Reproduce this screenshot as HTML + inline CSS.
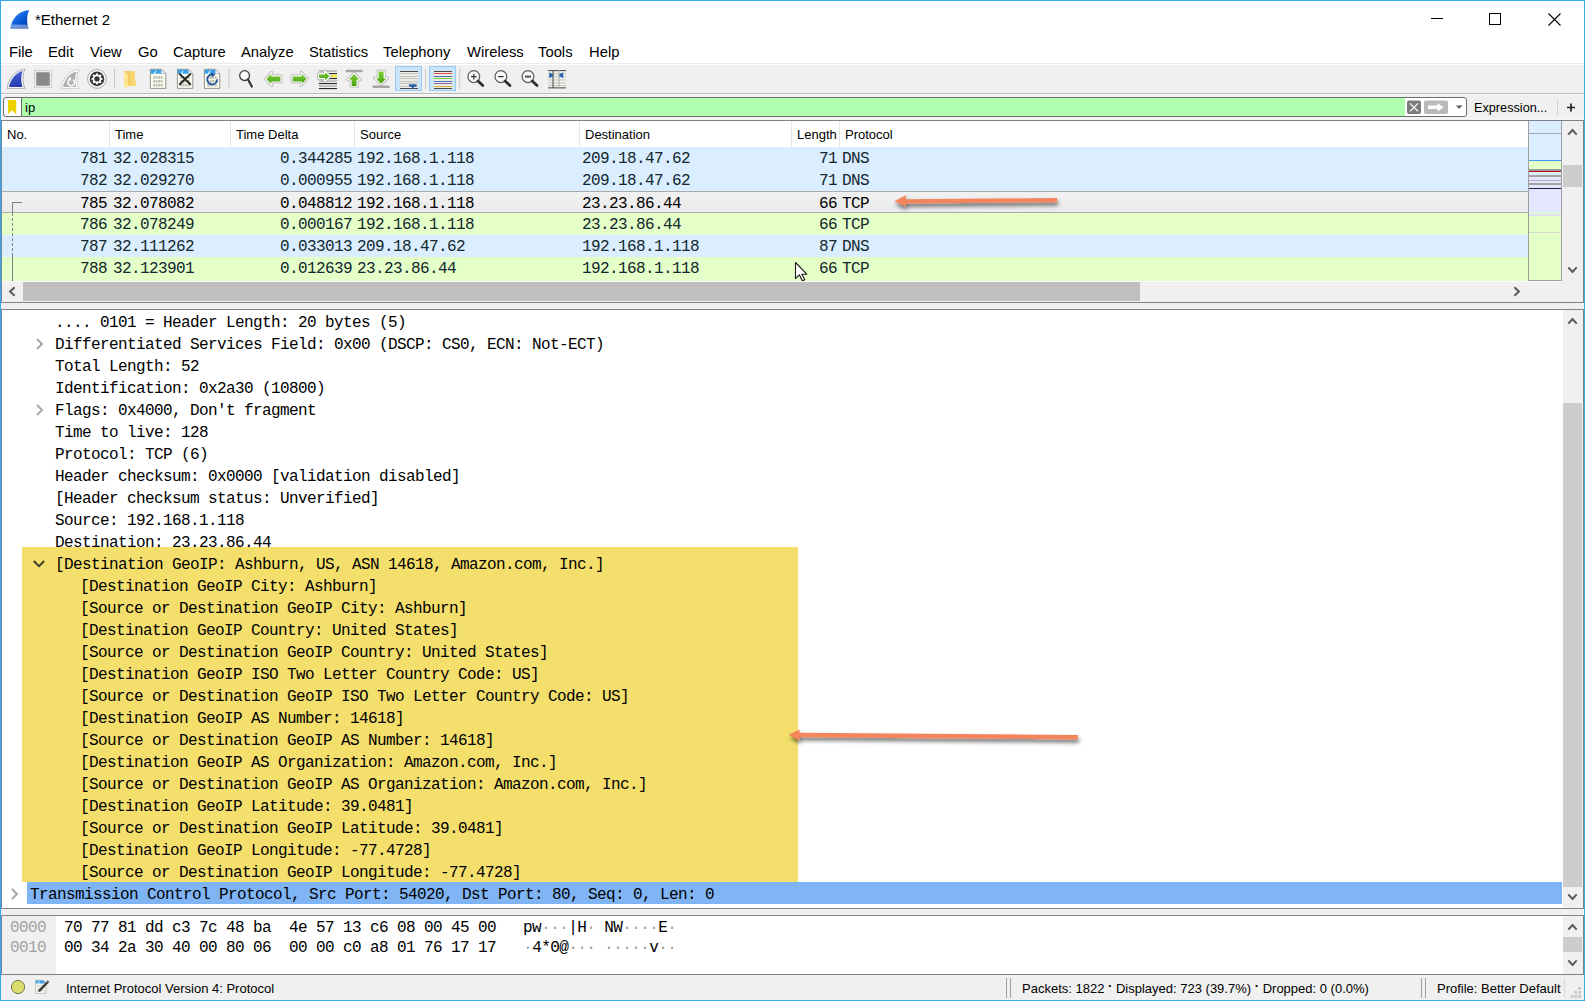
<!DOCTYPE html>
<html><head><meta charset="utf-8">
<style>
*{margin:0;padding:0;box-sizing:border-box}
html,body{width:1585px;height:1001px;overflow:hidden;background:#fff}
body{position:relative;font-family:"Liberation Sans",sans-serif;color:#000}
.a{position:absolute}
.mono{font-family:"Liberation Mono",monospace;font-size:16px;letter-spacing:-0.6px;white-space:pre}
.sans{font-family:"Liberation Sans",sans-serif;white-space:pre}
/* frame */
#bt{left:0;top:0;width:1585px;height:1px;background:#35a8f0}
#bl{left:0;top:0;width:1px;height:1001px;background:#35a8f0}
#br{left:1584px;top:0;width:1px;height:1001px;background:#35a8f0}
#bb{left:0;top:1000px;width:1585px;height:1px;background:#35a8f0}
/* title */
#title{left:35px;top:10px;font-size:15px;line-height:20px}
.menu{top:42px;font-size:14.8px;line-height:20px}
#toolbar{left:1px;top:63px;width:1583px;height:30px;background:#f0f0f0;border-top:1px solid #ebebeb;box-shadow:inset 0 1px 0 #fff}
#filterbar{left:1px;top:93px;width:1583px;height:27px;background:#f0f0f0;border-top:1px solid #a0a0a0}
/* packet list */
#plist{left:1px;top:120px;width:1583px;height:182px;background:#fff;border-top:1px solid #a0a0a0;border-left:1px solid #a0a0a0}
.hdr{top:122px;height:26px;font-size:13px;line-height:26px}
.hsep{top:121px;width:1px;height:26px;background:#e5e5e5}
.row{left:2px;width:1526px;height:22px}
.cell{top:0;line-height:22px}
.pr{left:0;width:1526px;height:22px;line-height:22px}
.pr span{top:1px}
.dl{line-height:22px;height:22px;padding-top:2px}
.hx{line-height:20px;height:20px;padding-top:2px}
.off{color:#a3a3a3}
.g{color:#a0a0a0}
.st{top:980px;font-size:13px;line-height:18px}
</style></head><body>
<div class="a" id="bt"></div><div class="a" id="bl"></div><div class="a" id="br"></div><div class="a" id="bb"></div>

<!-- title bar -->
<svg class="a" style="left:10px;top:10px" width="20" height="20" viewBox="0 0 20 20">
<defs><linearGradient id="fin" x1="0" y1="0" x2="1" y2="1"><stop offset="0" stop-color="#4a94f2"/><stop offset="0.55" stop-color="#0a5ad8"/><stop offset="1" stop-color="#032f94"/></linearGradient>
<linearGradient id="finb" x1="0" y1="0" x2="0" y2="1"><stop offset="0" stop-color="#fff" stop-opacity="0"/><stop offset="0.75" stop-color="#fff" stop-opacity="0"/><stop offset="0.85" stop-color="#c8d8f8" stop-opacity="0.55"/><stop offset="1" stop-color="#8090c0" stop-opacity="0.7"/></linearGradient></defs>
<path d="M0.4 18.6 C1.6 9 8 1.2 19.4 0.1 C17 4 16.3 11 18.4 18.6 Z" fill="url(#fin)"/>
<path d="M0.4 18.6 C1.6 9 8 1.2 19.4 0.1 C17 4 16.3 11 18.4 18.6 Z" fill="url(#finb)"/>
</svg>
<div class="a sans" id="title">*Ethernet 2</div>
<div class="a" style="left:1431px;top:18px;width:12px;height:1px;background:#000"></div>
<div class="a" style="left:1489px;top:13px;width:12px;height:12px;border:1px solid #000"></div>
<svg class="a" style="left:1548px;top:13px" width="13" height="13" viewBox="0 0 13 13"><path d="M0.5 0.5L12.5 12.5M12.5 0.5L0.5 12.5" stroke="#000" stroke-width="1.1"/></svg>

<!-- menu -->
<div class="a sans menu" style="left:9px">File</div>
<div class="a sans menu" style="left:48px">Edit</div>
<div class="a sans menu" style="left:90px">View</div>
<div class="a sans menu" style="left:138px">Go</div>
<div class="a sans menu" style="left:173px">Capture</div>
<div class="a sans menu" style="left:241px">Analyze</div>
<div class="a sans menu" style="left:309px">Statistics</div>
<div class="a sans menu" style="left:383px">Telephony</div>
<div class="a sans menu" style="left:467px">Wireless</div>
<div class="a sans menu" style="left:538px">Tools</div>
<div class="a sans menu" style="left:589px">Help</div>

<div class="a" id="toolbar"></div>
<svg class="a" style="left:0;top:64px" width="600" height="29" viewBox="0 64 600 29">
<defs>
<linearGradient id="bfin" x1="0" y1="0" x2="0.3" y2="1"><stop offset="0" stop-color="#6a80dc"/><stop offset="0.5" stop-color="#3a52c8"/><stop offset="1" stop-color="#2a3cb0"/></linearGradient>
<linearGradient id="grn" x1="0" y1="0" x2="0" y2="1"><stop offset="0" stop-color="#7fcf3a"/><stop offset="1" stop-color="#4aa010"/></linearGradient>
<linearGradient id="fold" x1="0" y1="0" x2="1" y2="1"><stop offset="0" stop-color="#fde79a"/><stop offset="1" stop-color="#f2c65a"/></linearGradient>
</defs>
<!-- 1 shark fin -->
<path d="M7.2 88.4 C8.5 79 14 70.5 25 69.2 C22.5 74 22 81 24.8 88.4 Z" fill="#fff" stroke="#9a9a9a" stroke-width="0.8"/>
<path d="M9 87 C10.5 80 15 72.5 22.8 71 C21 75 20.6 81 22.6 87 Z" fill="url(#bfin)"/>
<!-- 2 stop -->
<rect x="34.3" y="70.3" width="17.4" height="17.4" fill="#ebebeb" stroke="#c8c8c8" stroke-width="0.8"/>
<rect x="36.2" y="72.2" width="13.6" height="13.6" rx="1" fill="#8a8a8a"/>
<!-- 3 restart fin -->
<path d="M61.2 88.4 C62.5 79 68 70.5 79 69.2 C76.5 74 76 81 78.8 88.4 Z" fill="#fff" stroke="#c4c4c4" stroke-width="0.8"/>
<path d="M63 87 C64.5 80 69 72.5 76.8 71.8 C75 75 74.6 81 76.3 87 Z" fill="#b0b0b0"/>
<path d="M73 79.6 A3.3 3.3 0 1 1 69 80" fill="none" stroke="#fff" stroke-width="1.6"/>
<path d="M67.6 79.6 L70.6 76.6 L71.2 80.8Z" fill="#fff"/>
<!-- 4 gear -->
<circle cx="97" cy="78.9" r="9.4" fill="#fafafa" stroke="#a6a6a6" stroke-width="1"/>
<circle cx="97" cy="78.9" r="7.3" fill="#383838"/>
<g fill="#fff" transform="translate(97 78.9)">
<circle r="4.3"/>
<rect x="-0.95" y="-5.5" width="1.9" height="11"/>
<rect x="-0.95" y="-5.5" width="1.9" height="11" transform="rotate(45)"/>
<rect x="-0.95" y="-5.5" width="1.9" height="11" transform="rotate(90)"/>
<rect x="-0.95" y="-5.5" width="1.9" height="11" transform="rotate(135)"/>
</g>
<circle cx="97" cy="78.9" r="2.7" fill="#383838"/>
<!-- sep -->
<rect x="114" y="69" width="1" height="20" fill="#c8c8c8"/>
<!-- 6 folder -->
<defs><linearGradient id="fold2" x1="0" y1="0" x2="1" y2="0"><stop offset="0" stop-color="#eec558"/><stop offset="1" stop-color="#fcdd78"/></linearGradient></defs>
<path d="M124.4 71 L135 71 L135 80.6 L135.9 81.4 L135.9 86 L126.5 86 Z" fill="url(#fold2)"/>
<path d="M124 71 L127.8 74 L127.8 85.8 L126.6 88.2 L124 86.2 Z" fill="#fde596"/>
<!-- 7 doc -->
<path d="M150.4 69.4 L161.6 69.4 L165.8 73.6 L165.8 88.4 L150.4 88.4 Z" fill="#fcfcee" stroke="#7a7a7a" stroke-width="0.8"/><path d="M150.8 69.8 L161.4 69.8 L165.4 73.8 L150.8 73.8 Z" fill="#34a2ea"/><path d="M161.4 69.8 L165.4 73.6 L161.4 73.6 L161.4 69.8Z" fill="#fff" stroke="#b0b0b0" stroke-width="0.5"/><path d="M153.6 73.8 Q154.6 71 157.2 69.8 Q155.4 71.5 155.6 73.8Z" fill="#fff" opacity="0.85"/><g fill="#a8a8a0" opacity="0.8"><rect x="153.2" y="76.2" width="1.9" height="2.5"/><rect x="155.7" y="76.2" width="1.9" height="2.5"/><rect x="158.2" y="76.2" width="1.9" height="2.5"/><rect x="160.7" y="76.2" width="1.9" height="2.5"/><rect x="153.2" y="80.1" width="1.9" height="2.5"/><rect x="155.7" y="80.1" width="1.9" height="2.5"/><rect x="158.2" y="80.1" width="1.9" height="2.5"/><rect x="160.7" y="80.1" width="1.9" height="2.5"/><rect x="153.2" y="83.9" width="1.9" height="2.5"/><rect x="155.7" y="83.9" width="1.9" height="2.5"/><rect x="158.2" y="83.9" width="1.9" height="2.5"/><rect x="160.7" y="83.9" width="1.9" height="2.5"/></g>
<!-- 8 doc x -->
<path d="M177.4 69.4 L188.6 69.4 L192.8 73.6 L192.8 88.4 L177.4 88.4 Z" fill="#fcfcee" stroke="#7a7a7a" stroke-width="0.8"/><path d="M177.8 69.8 L188.4 69.8 L192.4 73.8 L177.8 73.8 Z" fill="#34a2ea"/><path d="M188.4 69.8 L192.4 73.6 L188.4 73.6 L188.4 69.8Z" fill="#fff" stroke="#b0b0b0" stroke-width="0.5"/><path d="M180.6 73.8 Q181.6 71 184.2 69.8 Q182.4 71.5 182.6 73.8Z" fill="#fff" opacity="0.85"/><g fill="#a8a8a0" opacity="0.8"><rect x="180.2" y="76.2" width="1.9" height="2.5"/><rect x="182.7" y="76.2" width="1.9" height="2.5"/><rect x="185.2" y="76.2" width="1.9" height="2.5"/><rect x="187.7" y="76.2" width="1.9" height="2.5"/><rect x="180.2" y="80.1" width="1.9" height="2.5"/><rect x="182.7" y="80.1" width="1.9" height="2.5"/><rect x="185.2" y="80.1" width="1.9" height="2.5"/><rect x="187.7" y="80.1" width="1.9" height="2.5"/><rect x="180.2" y="83.9" width="1.9" height="2.5"/><rect x="182.7" y="83.9" width="1.9" height="2.5"/><rect x="185.2" y="83.9" width="1.9" height="2.5"/><rect x="187.7" y="83.9" width="1.9" height="2.5"/></g>
<path d="M179.3 73.6 L190.8 84.8 M190.8 73.6 L179.3 84.8" stroke="#262626" stroke-width="2"/>
<!-- 9 doc reload -->
<path d="M204.4 69.4 L215.6 69.4 L219.8 73.6 L219.8 88.4 L204.4 88.4 Z" fill="#fcfcee" stroke="#7a7a7a" stroke-width="0.8"/><path d="M204.8 69.8 L215.4 69.8 L219.4 73.8 L204.8 73.8 Z" fill="#34a2ea"/><path d="M215.4 69.8 L219.4 73.6 L215.4 73.6 L215.4 69.8Z" fill="#fff" stroke="#b0b0b0" stroke-width="0.5"/><path d="M207.6 73.8 Q208.6 71 211.2 69.8 Q209.4 71.5 209.6 73.8Z" fill="#fff" opacity="0.85"/><g fill="#a8a8a0" opacity="0.8"><rect x="207.2" y="76.2" width="1.9" height="2.5"/><rect x="209.7" y="76.2" width="1.9" height="2.5"/><rect x="212.2" y="76.2" width="1.9" height="2.5"/><rect x="214.7" y="76.2" width="1.9" height="2.5"/><rect x="207.2" y="80.1" width="1.9" height="2.5"/><rect x="209.7" y="80.1" width="1.9" height="2.5"/><rect x="212.2" y="80.1" width="1.9" height="2.5"/><rect x="214.7" y="80.1" width="1.9" height="2.5"/><rect x="207.2" y="83.9" width="1.9" height="2.5"/><rect x="209.7" y="83.9" width="1.9" height="2.5"/><rect x="212.2" y="83.9" width="1.9" height="2.5"/><rect x="214.7" y="83.9" width="1.9" height="2.5"/></g>
<path d="M213.4 74.6 A5 5 0 1 0 217.2 79.2" fill="none" stroke="#1f4f9a" stroke-width="1.7"/>
<path d="M211.2 72.6 L215.6 74.4 L211.8 77.2Z" fill="#1f4f9a"/>
<!-- sep -->
<rect x="228.5" y="69" width="1" height="20" fill="#c8c8c8"/>
<!-- 11 find -->
<circle cx="244.6" cy="75.6" r="4.9" fill="#fbfbfb" stroke="#3c3c3c" stroke-width="1.3"/>
<path d="M248 79.5 L251.8 86.5" stroke="#333" stroke-width="2.2" stroke-linecap="round"/>
<!-- 12 back arrow -->
<path d="M265.6 78.9 L271.8 72.4 L271.8 75.8 L281 75.8 L281 82 L271.8 82 L271.8 85.4 Z" fill="none" stroke="#a8a8a8" stroke-width="2.6" stroke-linejoin="round"/><path d="M265.6 78.9 L271.8 72.4 L271.8 75.8 L281 75.8 L281 82 L271.8 82 L271.8 85.4 Z" fill="url(#grn)" stroke="#fff" stroke-width="1.2" stroke-linejoin="round"/>
<!-- 13 fwd arrow -->
<path d="M307.4 78.9 L301.2 72.4 L301.2 75.8 L292 75.8 L292 82 L301.2 82 L301.2 85.4 Z" fill="none" stroke="#a8a8a8" stroke-width="2.6" stroke-linejoin="round"/><path d="M307.4 78.9 L301.2 72.4 L301.2 75.8 L292 75.8 L292 82 L301.2 82 L301.2 85.4 Z" fill="url(#grn)" stroke="#fff" stroke-width="1.2" stroke-linejoin="round"/>
<!-- 14 go to packet -->
<rect x="318.8" y="70.5" width="18.2" height="1.1" fill="#9a9a9a"/><rect x="318.8" y="73.0" width="18.2" height="1.1" fill="#2a2a2a"/><rect x="318.8" y="75.5" width="18.2" height="1.1" fill="#2a2a2a"/><rect x="318.8" y="78.0" width="18.2" height="1.1" fill="#2a2a2a"/><rect x="318.8" y="80.5" width="18.2" height="1.1" fill="#9a9a9a"/><rect x="318.8" y="83.0" width="18.2" height="1.1" fill="#2a2a2a"/><rect x="318.8" y="85.5" width="18.2" height="1.1" fill="#9a9a9a"/><rect x="318.8" y="88.0" width="18.2" height="1.1" fill="#2a2a2a"/><rect x="330" y="74.8" width="7" height="2.6" fill="#f6e23a"/>
<path d="M318.5 73.8 L324.6 73.8 L324.6 70.8 L330.4 76.2 L324.6 81.6 L324.6 78.6 L318.5 78.6 Z" fill="none" stroke="#a8a8a8" stroke-width="2.6" stroke-linejoin="round"/><path d="M318.5 73.8 L324.6 73.8 L324.6 70.8 L330.4 76.2 L324.6 81.6 L324.6 78.6 L318.5 78.6 Z" fill="url(#grn)" stroke="#fff" stroke-width="1.2" stroke-linejoin="round"/>
<!-- 15 first packet -->
<rect x="345.6" y="69.8" width="17" height="2.4" rx="1.2" fill="#a4a4a4"/>
<path d="M354.1 73.2 L360.6 80 L357.2 80 L357.2 86.8 L351 86.8 L351 80 L347.6 80 Z" fill="none" stroke="#a8a8a8" stroke-width="2.6" stroke-linejoin="round"/><path d="M354.1 73.2 L360.6 80 L357.2 80 L357.2 86.8 L351 86.8 L351 80 L347.6 80 Z" fill="url(#grn)" stroke="#fff" stroke-width="1.2" stroke-linejoin="round"/>
<!-- 16 last packet -->
<rect x="372.4" y="85.6" width="17.4" height="2.4" rx="1.2" fill="#a4a4a4"/>
<path d="M381.1 84.6 L387.6 77.8 L384.2 77.8 L384.2 71 L378 71 L378 77.8 L374.6 77.8 Z" fill="none" stroke="#a8a8a8" stroke-width="2.6" stroke-linejoin="round"/><path d="M381.1 84.6 L387.6 77.8 L384.2 77.8 L384.2 71 L378 71 L378 77.8 L374.6 77.8 Z" fill="url(#grn)" stroke="#fff" stroke-width="1.2" stroke-linejoin="round"/>
<!-- 17 autoscroll toggled -->
<rect x="395.5" y="66.5" width="26" height="24" fill="#cce4f7" stroke="#99c9f5" stroke-width="1"/>
<rect x="400" y="71" width="18" height="18" fill="#ececE6"/><rect x="400" y="71" width="18" height="1" fill="#4a4a4a"/><rect x="400" y="73" width="18" height="1" fill="#c4c4bc"/><rect x="400" y="76" width="18" height="1" fill="#c4c4bc"/><rect x="400" y="78" width="18" height="1" fill="#c4c4bc"/><rect x="400" y="81" width="18" height="1" fill="#c4c4bc"/><rect x="400" y="83" width="18" height="1" fill="#c4c4bc"/><rect x="400" y="86" width="18" height="1" fill="#c4c4bc"/><rect x="400" y="88" width="18" height="1" fill="#4a4a4a"/><path d="M408.6 85.6 Q408.6 84.2 411 84.2 L414.6 84.2 Q417 84.2 417 85.6 Q417 86.8 413.6 87.2 L413.6 88.6 L412 88.6 L412 87.2 Q408.6 86.8 408.6 85.6Z" fill="#2a5ca8"/>
<!-- sep -->
<rect x="425" y="69" width="1" height="20" fill="#c8c8c8"/>
<!-- 19 colorize toggled -->
<rect x="429.5" y="66.5" width="26" height="24" fill="#cce4f7" stroke="#99c9f5" stroke-width="1"/>
<rect x="434" y="71" width="18" height="18" fill="#ececE6"/><rect x="434" y="71" width="18" height="1" fill="#4a4a4a"/><rect x="434" y="73" width="18" height="1" fill="#e84848"/><rect x="434" y="76" width="18" height="1" fill="#4a6eb4"/><rect x="434" y="78" width="18" height="1" fill="#78d040"/><rect x="434" y="81" width="18" height="1" fill="#4a6eb4"/><rect x="434" y="83" width="18" height="1" fill="#8a64a0"/><rect x="434" y="86" width="18" height="1" fill="#d8b030"/><rect x="434" y="88" width="18" height="1" fill="#4a4a4a"/>
<!-- sep -->
<rect x="459.2" y="69" width="1" height="20" fill="#c8c8c8"/>
<!-- 21 zoom in -->
<circle cx="473.8" cy="76.6" r="5.9" fill="#f8f8f8" stroke="#5e5e5e" stroke-width="1.25"/>
<path d="M471 76.6 L476.6 76.6 M473.8 73.8 L473.8 79.4" stroke="#333" stroke-width="1.2"/>
<path d="M478 81 L482.8 85.6" stroke="#2e2e2e" stroke-width="2.8" stroke-linecap="round"/>
<!-- 22 zoom out -->
<circle cx="500.9" cy="76.6" r="5.9" fill="#f8f8f8" stroke="#5e5e5e" stroke-width="1.25"/>
<path d="M498.1 76.6 L503.7 76.6" stroke="#333" stroke-width="1.2"/>
<path d="M505.1 81 L509.9 85.6" stroke="#2e2e2e" stroke-width="2.8" stroke-linecap="round"/>
<!-- 23 zoom normal -->
<circle cx="528" cy="76.6" r="5.9" fill="#f8f8f8" stroke="#5e5e5e" stroke-width="1.25"/>
<rect x="525" y="75.6" width="6" height="2" fill="#555"/>
<path d="M532.2 81 L537 85.6" stroke="#2e2e2e" stroke-width="2.8" stroke-linecap="round"/>
<!-- 24 resize columns -->
<rect x="548" y="70.5" width="18" height="17" fill="#eeeeea"/>
<g fill="#c6c6c0"><rect x="548" y="73.5" width="18" height="0.9"/><rect x="548" y="76.5" width="18" height="0.9"/><rect x="548" y="79.5" width="18" height="0.9"/><rect x="548" y="82.5" width="18" height="0.9"/><rect x="548" y="85" width="18" height="0.9"/></g>
<g fill="#555"><rect x="548" y="70" width="18" height="1.1"/><rect x="548" y="87.3" width="18" height="1.1"/><rect x="552.5" y="70" width="1.1" height="18"/><rect x="558.5" y="70" width="1" height="18" fill="#aaa"/></g>
<path d="M549.2 72.4 Q553.4 74.2 553.4 75.2 Q553.4 76.2 549.2 78 Z M563.2 72.4 Q559 74.2 559 75.2 Q559 76.2 563.2 78 Z" fill="#2a64b8"/>
</svg>

<!-- filter bar -->
<div class="a" style="left:1px;top:93px;width:1583px;height:27px;background:#f0f0f0"></div>
<div class="a" style="left:1px;top:93px;width:1583px;height:1px;background:#b9b9b9"></div>
<div class="a" style="left:1px;top:94px;width:1583px;height:1px;background:#fafafa"></div>
<div class="a" style="left:3px;top:97px;width:1464px;height:20px;border:1px solid #6e6e6e;border-radius:3px;background:#fff"></div>
<div class="a" style="left:21px;top:98px;width:1px;height:18px;background:#6e6e6e"></div>
<div class="a" style="left:22px;top:98px;width:1383px;height:18px;background:#afffaf"></div>
<svg class="a" style="left:8px;top:100px" width="9" height="15" viewBox="0 0 9 15"><path d="M0 0H8.2V14.2L4.1 10.3L0 14.2Z" fill="#ecd300"/></svg>
<div class="a sans" style="left:25px;top:100px;font-size:13px;line-height:16px">ip</div>
<svg class="a" style="left:1406px;top:100px" width="60" height="15" viewBox="0 0 60 15">
<rect x="1" y="0.4" width="14" height="13.6" rx="2" fill="#7b7b7b"/>
<path d="M4 3.4L12 11.4M12 3.4L4 11.4" stroke="#fff" stroke-width="1.3"/>
<rect x="18" y="0.4" width="24" height="13.6" rx="2" fill="#b9b9b9"/>
<path d="M22 5.5H31.5V3L37.5 7.2L31.5 11.4V9H22Z" fill="#fff"/>
<path d="M50 5.5H56.5L53.25 8.8Z" fill="#555"/>
</svg>
<div class="a sans" style="left:1474px;top:100px;font-size:12.7px;line-height:16px">Expression...</div>
<div class="a" style="left:1557px;top:99px;width:1px;height:16px;background:#d0d0d0"></div>
<svg class="a" style="left:1566px;top:103px" width="10" height="10" viewBox="0 0 10 10"><path d="M5 0.6V8.4M1 4.5H9" stroke="#222" stroke-width="1.7"/></svg>
<div class="a" style="left:1px;top:118px;width:1583px;height:1px;background:#f8f8f8"></div>
<div class="a" style="left:1px;top:120px;width:1583px;height:1px;background:#7e838b"></div>

<!-- packet list -->
<div class="a" style="left:1px;top:121px;width:1px;height:181px;background:#7e838b"></div>
<div class="a" style="left:2px;top:121px;width:1526px;height:26px;background:#fff"></div>
<div class="a hsep" style="left:109px"></div>
<div class="a hsep" style="left:230px"></div>
<div class="a hsep" style="left:354px"></div>
<div class="a hsep" style="left:579px"></div>
<div class="a hsep" style="left:791px"></div>
<div class="a hsep" style="left:839px"></div>
<div class="a sans hdr" style="left:7px">No.</div>
<div class="a sans hdr" style="left:115px">Time</div>
<div class="a sans hdr" style="left:236px">Time Delta</div>
<div class="a sans hdr" style="left:360px">Source</div>
<div class="a sans hdr" style="left:585px">Destination</div>
<div class="a sans hdr" style="left:797px">Length</div>
<div class="a sans hdr" style="left:845px">Protocol</div>


<!-- packet rows -->
<div class="a row" style="top:147px;height:22px;background:#daeeff;"></div>
<div class="a mono pr" style="top:147px;color:#12272e"><span class="a" style="left:0;width:107px;text-align:right">781</span><span class="a" style="left:113px">32.028315</span><span class="a" style="left:0;width:352px;text-align:right">0.344285</span><span class="a" style="left:357px">192.168.1.118</span><span class="a" style="left:582px">209.18.47.62</span><span class="a" style="left:0;width:837px;text-align:right">71</span><span class="a" style="left:842px">DNS</span></div>
<div class="a row" style="top:169px;height:22px;background:#daeeff;"></div>
<div class="a mono pr" style="top:169px;color:#12272e"><span class="a" style="left:0;width:107px;text-align:right">782</span><span class="a" style="left:113px">32.029270</span><span class="a" style="left:0;width:352px;text-align:right">0.000955</span><span class="a" style="left:357px">192.168.1.118</span><span class="a" style="left:582px">209.18.47.62</span><span class="a" style="left:0;width:837px;text-align:right">71</span><span class="a" style="left:842px">DNS</span></div>
<div class="a row" style="top:191px;height:22px;background:linear-gradient(#f1f1f1,#ebebeb);border-top:1px solid #ababab;border-bottom:1px solid #ababab;"></div>
<div class="a mono pr" style="top:192px"><span class="a" style="left:0;width:107px;text-align:right">785</span><span class="a" style="left:113px">32.078082</span><span class="a" style="left:0;width:352px;text-align:right">0.048812</span><span class="a" style="left:357px">192.168.1.118</span><span class="a" style="left:582px">23.23.86.44</span><span class="a" style="left:0;width:837px;text-align:right">66</span><span class="a" style="left:842px">TCP</span></div>
<div class="a row" style="top:213px;height:22px;background:#e4ffc7;"></div>
<div class="a mono pr" style="top:213px;color:#12272e"><span class="a" style="left:0;width:107px;text-align:right">786</span><span class="a" style="left:113px">32.078249</span><span class="a" style="left:0;width:352px;text-align:right">0.000167</span><span class="a" style="left:357px">192.168.1.118</span><span class="a" style="left:582px">23.23.86.44</span><span class="a" style="left:0;width:837px;text-align:right">66</span><span class="a" style="left:842px">TCP</span></div>
<div class="a row" style="top:235px;height:22px;background:#daeeff;"></div>
<div class="a mono pr" style="top:235px;color:#12272e"><span class="a" style="left:0;width:107px;text-align:right">787</span><span class="a" style="left:113px">32.111262</span><span class="a" style="left:0;width:352px;text-align:right">0.033013</span><span class="a" style="left:357px">209.18.47.62</span><span class="a" style="left:582px">192.168.1.118</span><span class="a" style="left:0;width:837px;text-align:right">87</span><span class="a" style="left:842px">DNS</span></div>
<div class="a row" style="top:257px;height:24px;background:#e4ffc7;"></div>
<div class="a mono pr" style="top:257px;color:#12272e"><span class="a" style="left:0;width:107px;text-align:right">788</span><span class="a" style="left:113px">32.123901</span><span class="a" style="left:0;width:352px;text-align:right">0.012639</span><span class="a" style="left:357px">23.23.86.44</span><span class="a" style="left:582px">192.168.1.118</span><span class="a" style="left:0;width:837px;text-align:right">66</span><span class="a" style="left:842px">TCP</span></div>
<!-- related packets tree line -->
<div class="a" style="left:12px;top:202px;width:10px;height:1px;background:#7b8189"></div>
<div class="a" style="left:12px;top:202px;width:1px;height:11px;background:#7b8189"></div>
<div class="a" style="left:12px;top:213px;width:1px;height:40px;background:repeating-linear-gradient(#7b8189 0 3px,transparent 3px 5px)"></div>
<div class="a" style="left:12px;top:253px;width:1px;height:28px;background:#7b8189"></div>
<!-- minimap -->
<div class="a" style="left:1528px;top:121px;width:34px;height:160px;background:#e4ffc7;border:1px solid #a0a0a0;border-top:none"></div>
<div class="a" style="left:1529px;top:121px;width:32px;height:12px;background:#daeeff"></div>
<div class="a" style="left:1529px;top:133px;width:32px;height:1px;background:#a8a8a8"></div>
<div class="a" style="left:1529px;top:134px;width:32px;height:26px;background:#daeeff"></div>
<div class="a" style="left:1529px;top:160px;width:32px;height:1px;background:#3d9cf0"></div>
<div class="a" style="left:1529px;top:161px;width:32px;height:8px;background:#e4ffc7"></div>
<div class="a" style="left:1529px;top:169px;width:32px;height:2px;background:#9a9a9a"></div>
<div class="a" style="left:1529px;top:171px;width:32px;height:1px;background:#b01010"></div>
<div class="a" style="left:1529px;top:172px;width:32px;height:3px;background:#daeeff"></div>
<div class="a" style="left:1529px;top:175px;width:32px;height:2px;background:#a4a4a4"></div>
<div class="a" style="left:1529px;top:177px;width:32px;height:11px;background:#e7e6ff"></div>
<div class="a" style="left:1529px;top:180px;width:32px;height:1px;background:#b0b0b8"></div>
<div class="a" style="left:1529px;top:183px;width:32px;height:2px;background:#a4a4a8"></div>
<div class="a" style="left:1529px;top:188px;width:32px;height:1px;background:#1a2840"></div>
<div class="a" style="left:1529px;top:189px;width:32px;height:21px;background:#e7e6ff"></div>
<div class="a" style="left:1529px;top:210px;width:32px;height:3px;background:#e2ecf8"></div>
<div class="a" style="left:1529px;top:214px;width:32px;height:2px;background:#dde2ee"></div>
<div class="a" style="left:1529px;top:231px;width:32px;height:3px;background:repeating-linear-gradient(#e4ffc7 0 1px,#d8d8d8 1px 2px)"></div>
<!-- vscroll packet list -->
<div class="a" style="left:1562px;top:121px;width:22px;height:160px;background:#f0f0f0"></div>
<svg class="a" style="left:1567px;top:127px" width="11" height="9" viewBox="0 0 11 9"><path d="M1.3 7.6L5.5 3.1L9.7 7.6" fill="none" stroke="#5c5c5c" stroke-width="2.1"/></svg>
<div class="a" style="left:1563px;top:165px;width:19px;height:22px;background:#cdcdcd"></div>
<svg class="a" style="left:1567px;top:266px" width="11" height="9" viewBox="0 0 11 9"><path d="M1.3 1.4L5.5 5.9L9.7 1.4" fill="none" stroke="#5c5c5c" stroke-width="2.1"/></svg>
<!-- hscroll packet list -->
<div class="a" style="left:2px;top:281px;width:1582px;height:21px;background:#f0f0f0"></div>
<div class="a" style="left:2px;top:281px;width:1560px;height:1px;background:#fbfbfb"></div>
<svg class="a" style="left:7px;top:286px" width="9" height="11" viewBox="0 0 9 11"><path d="M7.6 1.3L3.1 5.5L7.6 9.7" fill="none" stroke="#5c5c5c" stroke-width="2.1"/></svg>
<div class="a" style="left:23px;top:282px;width:1117px;height:19px;background:#bfbfbf"></div>
<svg class="a" style="left:1513px;top:286px" width="9" height="11" viewBox="0 0 9 11"><path d="M1.4 1.3L5.9 5.5L1.4 9.7" fill="none" stroke="#5c5c5c" stroke-width="2.1"/></svg>
<!-- splitter 1 -->
<div class="a" style="left:1px;top:302px;width:1583px;height:1px;background:#7e838b"></div>
<div class="a" style="left:1px;top:303px;width:1583px;height:6px;background:#f0f0f0"></div>
<div class="a" style="left:1px;top:309px;width:1583px;height:1px;background:#7e838b"></div>
<!-- arrow 1 -->
<svg class="a" style="left:880px;top:185px" width="200" height="35" viewBox="880 185 200 35">
<defs><filter id="sh" x="-10%" y="-150%" width="120%" height="400%"><feGaussianBlur in="SourceAlpha" stdDeviation="2"/><feOffset dx="1" dy="3.2"/><feComponentTransfer><feFuncA type="linear" slope="0.6"/></feComponentTransfer><feMerge><feMergeNode/><feMergeNode in="SourceGraphic"/></feMerge></filter></defs>
<path d="M894.4 201.2 L905.8 195.2 L905.8 199.2 L1057 198 L1057 202.2 L905.8 203.4 L905.8 206.8 Z" fill="#f4845c" filter="url(#sh)"/>
</svg>
<!-- cursor -->
<svg class="a" style="left:794px;top:261px" width="15" height="22" viewBox="794 261 15 22">
<path d="M795.5 262.5 L795.5 278.5 L799.3 274.8 L802.3 280.8 L804.8 279.8 L801.8 274.2 L806.8 274.2 Z" fill="#fff" stroke="#1a1a1a" stroke-width="1.1" stroke-linejoin="round"/>
</svg>
<!-- details pane -->
<div class="a" style="left:1px;top:310px;width:1px;height:598px;background:#7e838b"></div>
<div class="a" style="left:22px;top:547px;width:776px;height:335px;background:#f4df6c"></div>
<div class="a" style="left:27px;top:882px;width:1535px;height:22px;background:#80b5f5"></div>
<div class="a mono dl" style="left:55px;top:310px">.... 0101 = Header Length: 20 bytes (5)</div>
<div class="a mono dl" style="left:55px;top:332px">Differentiated Services Field: 0x00 (DSCP: CS0, ECN: Not-ECT)</div>
<svg class="a" style="left:35px;top:338px" width="10" height="12" viewBox="0 0 10 12"><path d="M2 1L7 6L2 11" fill="none" stroke="#a6a6a6" stroke-width="1.9"/></svg>
<div class="a mono dl" style="left:55px;top:354px">Total Length: 52</div>
<div class="a mono dl" style="left:55px;top:376px">Identification: 0x2a30 (10800)</div>
<div class="a mono dl" style="left:55px;top:398px">Flags: 0x4000, Don&#x27;t fragment</div>
<svg class="a" style="left:35px;top:404px" width="10" height="12" viewBox="0 0 10 12"><path d="M2 1L7 6L2 11" fill="none" stroke="#a6a6a6" stroke-width="1.9"/></svg>
<div class="a mono dl" style="left:55px;top:420px">Time to live: 128</div>
<div class="a mono dl" style="left:55px;top:442px">Protocol: TCP (6)</div>
<div class="a mono dl" style="left:55px;top:464px">Header checksum: 0x0000 [validation disabled]</div>
<div class="a mono dl" style="left:55px;top:486px">[Header checksum status: Unverified]</div>
<div class="a mono dl" style="left:55px;top:508px">Source: 192.168.1.118</div>
<div class="a mono dl" style="left:55px;top:530px">Destination: 23.23.86.44</div>
<div class="a mono dl" style="left:55px;top:552px">[Destination GeoIP: Ashburn, US, ASN 14618, Amazon.com, Inc.]</div>
<svg class="a" style="left:33px;top:560px" width="12" height="8" viewBox="0 0 12 8"><path d="M0.8 1L6 6.2L11.2 1" fill="none" stroke="#3c3a28" stroke-width="1.9"/></svg>
<div class="a mono dl" style="left:80px;top:574px">[Destination GeoIP City: Ashburn]</div>
<div class="a mono dl" style="left:80px;top:596px">[Source or Destination GeoIP City: Ashburn]</div>
<div class="a mono dl" style="left:80px;top:618px">[Destination GeoIP Country: United States]</div>
<div class="a mono dl" style="left:80px;top:640px">[Source or Destination GeoIP Country: United States]</div>
<div class="a mono dl" style="left:80px;top:662px">[Destination GeoIP ISO Two Letter Country Code: US]</div>
<div class="a mono dl" style="left:80px;top:684px">[Source or Destination GeoIP ISO Two Letter Country Code: US]</div>
<div class="a mono dl" style="left:80px;top:706px">[Destination GeoIP AS Number: 14618]</div>
<div class="a mono dl" style="left:80px;top:728px">[Source or Destination GeoIP AS Number: 14618]</div>
<div class="a mono dl" style="left:80px;top:750px">[Destination GeoIP AS Organization: Amazon.com, Inc.]</div>
<div class="a mono dl" style="left:80px;top:772px">[Source or Destination GeoIP AS Organization: Amazon.com, Inc.]</div>
<div class="a mono dl" style="left:80px;top:794px">[Destination GeoIP Latitude: 39.0481]</div>
<div class="a mono dl" style="left:80px;top:816px">[Source or Destination GeoIP Latitude: 39.0481]</div>
<div class="a mono dl" style="left:80px;top:838px">[Destination GeoIP Longitude: -77.4728]</div>
<div class="a mono dl" style="left:80px;top:860px">[Source or Destination GeoIP Longitude: -77.4728]</div>
<div class="a mono dl" style="left:30px;top:882px">Transmission Control Protocol, Src Port: 54020, Dst Port: 80, Seq: 0, Len: 0</div>
<svg class="a" style="left:10px;top:888px" width="10" height="12" viewBox="0 0 10 12"><path d="M2 1L7 6L2 11" fill="none" stroke="#a6a6a6" stroke-width="1.9"/></svg>
<div class="a" style="left:1563px;top:310px;width:20px;height:598px;background:#f0f0f0"></div>
<svg class="a" style="left:1567px;top:316px" width="11" height="9" viewBox="0 0 11 9"><path d="M1.3 7.6L5.5 3.1L9.7 7.6" fill="none" stroke="#5c5c5c" stroke-width="2.1"/></svg>
<div class="a" style="left:1563px;top:403px;width:19px;height:484px;background:#cdcdcd"></div>
<svg class="a" style="left:1567px;top:893px" width="11" height="9" viewBox="0 0 11 9"><path d="M1.3 1.4L5.5 5.9L9.7 1.4" fill="none" stroke="#5c5c5c" stroke-width="2.1"/></svg>
<svg class="a" style="left:780px;top:720px" width="310" height="35" viewBox="780 720 310 35">
<path d="M788.8 734.8 L799.6 729.4 L799.6 732.7 L1077.8 735 L1077.8 739.4 L799.6 737.2 L799.6 740.5 Z" fill="#f4845c" filter="url(#sh)"/>
</svg>
<div class="a" style="left:1px;top:908px;width:1583px;height:1px;background:#7e838b"></div>
<div class="a" style="left:1px;top:909px;width:1583px;height:6px;background:#f0f0f0"></div>
<div class="a" style="left:1px;top:915px;width:1583px;height:1px;background:#7e838b"></div>
<!-- hex pane -->
<div class="a" style="left:1px;top:916px;width:1px;height:58px;background:#7e838b"></div>
<div class="a" style="left:2px;top:916px;width:54px;height:58px;background:#f0f0f0"></div>
<div class="a mono hx" style="left:10px;top:916px"><span class="off">0000</span>  70 77 81 dd c3 7c 48 ba  4e 57 13 c6 08 00 45 00   pw<span class="g">·</span><span class="g">·</span><span class="g">·</span>|H<span class="g">·</span> NW<span class="g">·</span><span class="g">·</span><span class="g">·</span><span class="g">·</span>E<span class="g">·</span></div>
<div class="a mono hx" style="left:10px;top:936px"><span class="off">0010</span>  00 34 2a 30 40 00 80 06  00 00 c0 a8 01 76 17 17   <span class="g">·</span>4*0@<span class="g">·</span><span class="g">·</span><span class="g">·</span> <span class="g">·</span><span class="g">·</span><span class="g">·</span><span class="g">·</span><span class="g">·</span>v<span class="g">·</span><span class="g">·</span></div>
<div class="a" style="left:1563px;top:916px;width:20px;height:58px;background:#f0f0f0"></div>
<svg class="a" style="left:1567px;top:922px" width="11" height="9" viewBox="0 0 11 9"><path d="M1.3 7.6L5.5 3.1L9.7 7.6" fill="none" stroke="#5c5c5c" stroke-width="2.1"/></svg>
<div class="a" style="left:1563px;top:937px;width:19px;height:15px;background:#cdcdcd"></div>
<svg class="a" style="left:1567px;top:959px" width="11" height="9" viewBox="0 0 11 9"><path d="M1.3 1.4L5.5 5.9L9.7 1.4" fill="none" stroke="#5c5c5c" stroke-width="2.1"/></svg>
<div class="a" style="left:1px;top:974px;width:1583px;height:1px;background:#7e838b"></div>
<!-- status bar -->
<div class="a" style="left:1px;top:975px;width:1583px;height:25px;background:#f0f0f0"></div>
<svg class="a" style="left:10px;top:979px" width="16" height="16" viewBox="0 0 16 16"><circle cx="8" cy="8" r="6.6" fill="#dcdc6e" stroke="#6a6a4a" stroke-width="0.9"/></svg>
<svg class="a" style="left:34px;top:979px" width="17" height="17" viewBox="0 0 17 17">
<path d="M1.5 1.2H9.5L12 3.7V14.5H1.5Z" fill="#f6f6f0" stroke="#b4b4b0" stroke-width="0.7"/>
<path d="M1.8 1.5H9.4L10.8 3V4.6H1.8Z" fill="#3a9ee6"/>
<path d="M3.6 4.6Q4.4 2.6 6.2 1.6Q4.9 3 5 4.6Z" fill="#fff"/>
<g fill="#c8c8c4"><rect x="2.8" y="6.4" width="7.5" height="0.8"/><rect x="2.8" y="8.8" width="7.5" height="0.8"/><rect x="2.8" y="11.2" width="7.5" height="0.8"/></g>
<path d="M4.6 10.8L12.6 2.4L14.4 4L6.4 12.4L4.2 13Z" fill="#3c3c3c"/>
<path d="M12.6 2.4L13.6 1.3L15.4 2.9L14.4 4Z" fill="#5a5a5a"/>
</svg>
<div class="a sans st" style="left:66px">Internet Protocol Version 4: Protocol</div>
<div class="a" style="left:1006px;top:978px;width:1px;height:20px;background:#a0a0a0"></div>
<div class="a" style="left:1010px;top:978px;width:1px;height:20px;background:#a0a0a0"></div>
<div class="a sans st" style="left:1022px">Packets: 1822 <span style="position:relative;top:-3px;font-weight:bold">·</span> Displayed: 723 (39.7%) <span style="position:relative;top:-3px;font-weight:bold">·</span> Dropped: 0 (0.0%)</div>
<div class="a" style="left:1421px;top:978px;width:1px;height:20px;background:#a0a0a0"></div>
<div class="a" style="left:1425px;top:978px;width:1px;height:20px;background:#a0a0a0"></div>
<div class="a sans st" style="left:1437px">Profile: Better Default</div>
<div class="a" style="left:1564px;top:978px;width:1px;height:20px;background:#d8d8d8"></div>
<svg class="a" style="left:1570px;top:986px" width="12" height="12" viewBox="0 0 12 12" fill="#c8c8c8">
<rect x="8.3" y="1" width="2.8" height="2.8"/><rect x="4.3" y="5" width="2.8" height="2.8"/><rect x="8.3" y="5" width="2.8" height="2.8"/><rect x="0.8" y="9" width="2.8" height="2.8"/><rect x="4.3" y="9" width="2.8" height="2.8"/><rect x="8.3" y="9" width="2.8" height="2.8"/></svg>
<!-- right pane borders -->
<div class="a" style="left:1583px;top:120px;width:1px;height:183px;background:#7e838b"></div>
<div class="a" style="left:1583px;top:309px;width:1px;height:600px;background:#7e838b"></div>
<div class="a" style="left:1583px;top:915px;width:1px;height:60px;background:#7e838b"></div>
</body></html>
